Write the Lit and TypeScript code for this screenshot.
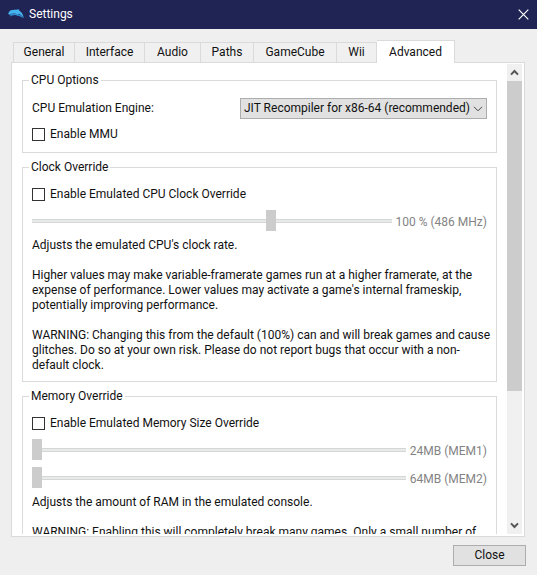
import { LitElement, html, css } from "lit";
import { customElement, property, state } from "lit/decorators.js";
import { classMap } from "lit/directives/class-map.js";

@customElement("settings-slider")
class SettingsSlider extends LitElement {
  @property() label = "";
  @property() text = "";
  @property({ type: Number }) value = 0;
  @property({ type: Number }) max = 100;

  static styles = css`
    :host {
      display: flex;
      align-items: center;
      gap: 4px;
      height: 22px;
    }
    .range {
      appearance: none;
      flex: 1;
      min-width: 0;
      height: 22px;
      margin: 0;
      background: none;
    }
    .range::-webkit-slider-runnable-track {
      height: 4px;
      box-sizing: border-box;
      border: 1px solid #d6d6d6;
      border-width: 1px 0;
      background: #e7eaea;
    }
    .range::-webkit-slider-thumb {
      appearance: none;
      width: 10px;
      height: 21px;
      margin-top: -10px;
      border: 0;
      border-radius: 0;
      background: #cccccc;
    }
    .value {
      color: #838383;
      white-space: nowrap;
      padding-top: 2px;
    }
  `;

  render() {
    return html`
      <input
        class="range"
        id="range"
        type="range"
        aria-label=${this.label}
        min="0"
        .max=${String(this.max)}
        .value=${String(this.value)}
        disabled
      />
      <label class="value" for="range">${this.text}</label>
    `;
  }
}

@customElement("app-root")
class AppRoot extends LitElement {
  @state() private active = "Advanced";

  private tabs = ["General", "Interface", "Audio", "Paths", "GameCube", "Wii", "Advanced"];

  static styles = css`
    :host {
      display: flex;
      flex-direction: column;
      height: 100vh;
      box-sizing: border-box;
      background: #efefef;
      color: #111111;
      font: 12px/15px Roboto, "Open Sans", sans-serif;
    }
    button,
    select {
      font: inherit;
      color: inherit;
    }
    .titlebar {
      display: flex;
      align-items: center;
      gap: 5px;
      height: 29px;
      flex: none;
      padding: 0 8px;
      background: #1f2455;
      color: #ffffff;
    }
    .logo {
      width: 16px;
      height: 16px;
    }
    .title {
      flex: 1;
      margin: 0;
      font-size: 12px;
      font-weight: 400;
    }
    .dismiss {
      display: flex;
      padding: 0;
      border: 0;
      background: none;
    }
    .tabs {
      display: flex;
      align-items: flex-end;
      flex: none;
      height: 22px;
      padding: 11px 13px 0;
    }
    .tab {
      height: 20px;
      padding: 0;
      border: 1px solid #dadada;
      border-width: 1px 1px 0 0;
      background: #f0f0f0;
      white-space: nowrap;
    }
    .tab:first-child {
      border-left-width: 1px;
    }
    .tab.w1 { width: 62px; }
    .tab.w2 { width: 70px; }
    .tab.w3 { width: 56px; }
    .tab.w4 { width: 53px; }
    .tab.w5 { width: 83px; }
    .tab.w6 { width: 40px; }
    .tab.active {
      width: 78px;
      height: 23px;
      margin-bottom: -1px;
      background: #ffffff;
      z-index: 1;
    }
    .panel {
      display: flex;
      flex: 1;
      min-height: 0;
      margin: 0 12px 0 11px;
      padding: 0 2px 2px 0;
      border: 1px solid #dadada;
      background: #ffffff;
    }
    .view {
      flex: 1;
      min-width: 0;
      overflow: hidden;
      padding: 10px 10px 0;
    }
    .group {
      margin: 0 0 7px;
      padding: 10px 9px 8px;
      border: 1px solid #dadada;
      min-width: 0;
    }
    .legend {
      padding: 0 2px;
      margin-left: -3px;
    }
    .stack {
      display: flex;
      flex-direction: column;
      gap: 6px;
    }
    .row {
      display: flex;
      align-items: center;
      justify-content: space-between;
    }
    .combo {
      display: grid;
      align-items: center;
      width: 247px;
    }
    .select,
    .chevron {
      grid-area: 1 / 1;
    }
    .select {
      appearance: none;
      width: 100%;
      height: 21px;
      padding: 0 0 0 3px;
      border: 1px solid #adadad;
      border-radius: 0;
      background: #e1e1e1;
    }
    .chevron {
      justify-self: end;
      margin-right: 4px;
      pointer-events: none;
    }
    .check {
      display: flex;
      align-items: center;
      gap: 5px;
      height: 19px;
    }
    .box {
      appearance: none;
      width: 13px;
      height: 13px;
      margin: 0;
      border: 1px solid #333333;
      background: #ffffff;
    }
    .box:checked {
      box-shadow: inset 0 0 0 2px #ffffff;
      background: #333333;
    }
    .note {
      margin: 0;
      white-space: pre;
    }
    .scroll {
      display: flex;
      flex-direction: column;
      flex: none;
      width: 15px;
      margin-top: 1px;
      background: #f0f0f0;
    }
    .arrow {
      display: flex;
      align-items: center;
      justify-content: center;
      height: 17px;
      padding: 0;
      border: 0;
      background: none;
    }
    .lane {
      flex: 1;
    }
    .thumb {
      height: 71%;
      background: #cccccc;
    }
    .footer {
      display: flex;
      justify-content: flex-end;
      flex: none;
      padding: 8px 11px 9px;
    }
    .close {
      width: 73px;
      height: 21px;
      padding: 0;
      border: 1px solid #adadad;
      background: #e1e1e1;
    }
  `;

  render() {
    return html`
      <header class="titlebar">
        <svg class="logo" viewBox="0 0 16 16" aria-hidden="true">
          <path
            fill="#45b4ee"
            d="M0 7.2 1 5 2.2 3.6C4.4 2.6 6.3 2.6 8 2.8L10.6 2.2 11.4 3.8C13.8 5 15 7.4 15.8 11C13.9 8.6 12.3 7.3 10.2 6.8L9.9 9 7.4 6.6C5 6.3 3.4 6.6 2.6 7.1L1.2 8.4 1.5 6.9Z"
          />
          <path fill="#2f8fd6" d="M2.6 7.1C5 6.2 8 6.4 10.4 7.2L13.6 8.8 15.4 11 11.6 9.2 9.4 8.6 7 8 4 8.4 2.2 9.4Z" />
        </svg>
        <h1 class="title">Settings</h1>
        <button class="dismiss" aria-label="Close window">
          <svg width="11" height="11" viewBox="0 0 11 11">
            <path d="M.7.7 10.3 10.3M10.3.7.7 10.3" stroke="#fff" stroke-width="1.2" />
          </svg>
        </button>
      </header>

      <div class="tabs" role="tablist">
        ${this.tabs.map(
          (name, i) => html`
            <button
              class=${classMap({ tab: true, [`w${i + 1}`]: true, active: name === this.active })}
              role="tab"
              aria-selected=${name === this.active}
              @click=${() => (this.active = name)}
            >${name}</button>
          `,
        )}
      </div>

      <main class="panel" role="tabpanel">
        <div class="view">
          <fieldset class="group">
            <legend class="legend">CPU Options</legend>
            <div class="stack">
              <div class="row">
                <label for="engine">CPU Emulation Engine:</label>
                <div class="combo">
                  <select class="select" id="engine">
                    <option>JIT Recompiler for x86-64 (recommended)</option>
                  </select>
                  <svg class="chevron" width="10" height="6" viewBox="0 0 10 6" aria-hidden="true">
                    <path d="M1 .8 5 4.8 9 .8" fill="none" stroke="#444" />
                  </svg>
                </div>
              </div>
              <label class="check"><input class="box" type="checkbox" />Enable MMU</label>
            </div>
          </fieldset>

          <fieldset class="group">
            <legend class="legend">Clock Override</legend>
            <div class="stack">
              <label class="check"><input class="box" type="checkbox" />Enable Emulated CPU Clock Override</label>
              <settings-slider label="CPU clock" text="100 % (486 MHz)" value="67"></settings-slider>
              <p class="note">Adjusts the emulated CPU's clock rate.

Higher values may make variable-framerate games run at a higher framerate, at the
expense of performance. Lower values may activate a game's internal frameskip,
potentially improving performance.

WARNING: Changing this from the default (100%) can and will break games and cause
glitches. Do so at your own risk. Please do not report bugs that occur with a non-
default clock.</p>
            </div>
          </fieldset>

          <fieldset class="group">
            <legend class="legend">Memory Override</legend>
            <div class="stack">
              <label class="check"><input class="box" type="checkbox" />Enable Emulated Memory Size Override</label>
              <settings-slider label="MEM1 size" text="24MB (MEM1)" value="0"></settings-slider>
              <settings-slider label="MEM2 size" text="64MB (MEM2)" value="0"></settings-slider>
              <p class="note">Adjusts the amount of RAM in the emulated console.

WARNING: Enabling this will completely break many games. Only a small number of</p>
            </div>
          </fieldset>
        </div>

        <div class="scroll">
          <button class="arrow" aria-label="Scroll up">
            <svg width="9" height="7" viewBox="0 0 9 7">
              <path d="M1 5.6 4.5 2 8 5.6" fill="none" stroke="#555" stroke-width="2" />
            </svg>
          </button>
          <div class="lane"><div class="thumb"></div></div>
          <button class="arrow" aria-label="Scroll down">
            <svg width="9" height="7" viewBox="0 0 9 7">
              <path d="M1 1.4 4.5 5 8 1.4" fill="none" stroke="#555" stroke-width="2" />
            </svg>
          </button>
        </div>
      </main>

      <footer class="footer">
        <button class="close">Close</button>
      </footer>
    `;
  }
}
